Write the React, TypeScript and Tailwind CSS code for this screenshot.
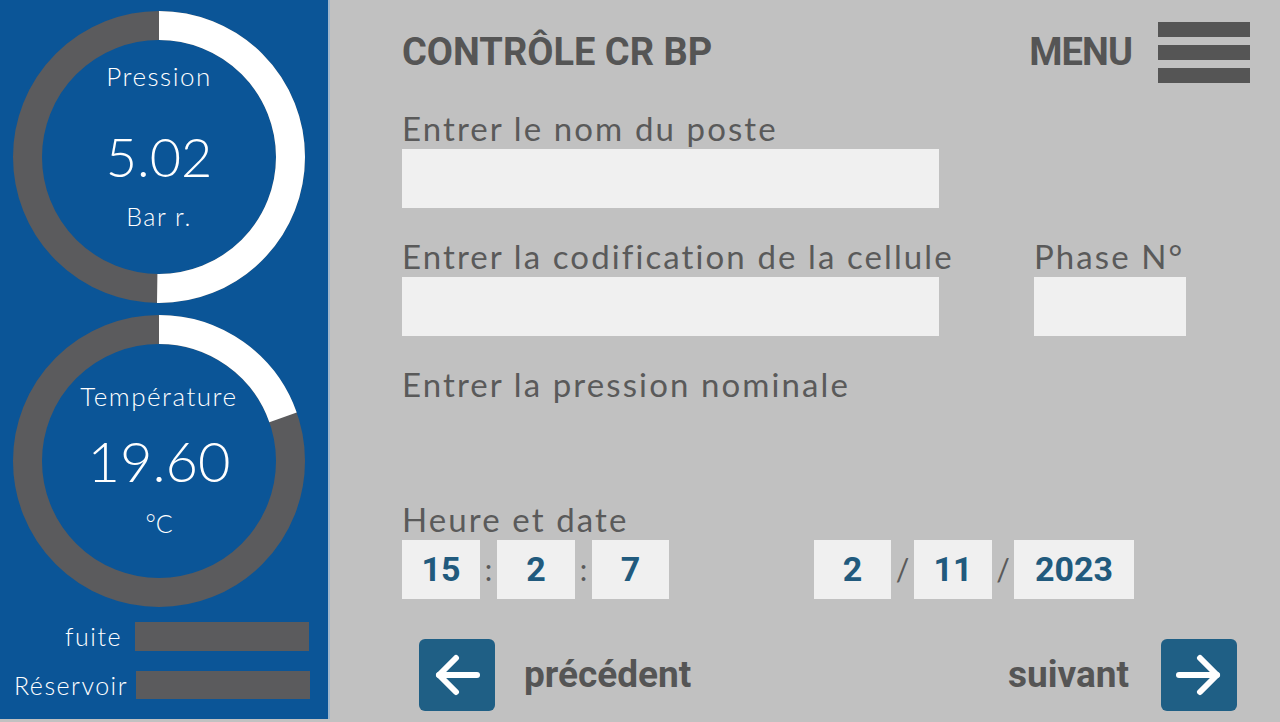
import React from 'react';

const BODY = "font-['Lato','Open_Sans',sans-serif]";
const HEAD = "font-['Roboto','Lato',sans-serif]";

interface GaugeProps {
  label: string;
  value: string;
  unit: string;
  fraction: number;
  valueClass: string;
  labelClass: string;
  unitClass: string;
}

const Gauge: React.FC<GaugeProps> = ({ label, value, unit, fraction, valueClass, labelClass, unitClass }) => {
  const r = 131.5;
  const c = 2 * Math.PI * r;
  return (
    <div className="relative w-[292px] h-[292px]">
      <svg width="292" height="292" viewBox="0 0 292 292">
        <circle cx="146" cy="146" r={r} fill="none" stroke="#5b5b5d" strokeWidth="29" />
        <circle
          cx="146"
          cy="146"
          r={r}
          fill="none"
          stroke="#ffffff"
          strokeWidth="29"
          strokeDasharray={`${c * fraction} ${c}`}
          transform="rotate(-90 146 146)"
        />
      </svg>
      <div className={`absolute inset-0 flex flex-col items-center text-white ${BODY}`}>
        <span className={labelClass}>{label}</span>
        <span className={valueClass}>{value}</span>
        <span className={unitClass}>{unit}</span>
      </div>
    </div>
  );
};

const Label = ({ children, className = '' }: { children: React.ReactNode; className?: string }) => (
  <p className={`text-[33px] leading-[36px] tracking-[2.1px] whitespace-nowrap ${className}`}>{children}</p>
);

const Field = ({ className }: { className: string }) => (
  <div className={`h-[59px] bg-[#f0f0f0] ${className}`}></div>
);

const Box = ({ v, w }: { v: string; w: string }) => (
  <div className={`h-[59px] ${w} bg-[#f0f0f0] flex items-center justify-center text-[34px] font-bold text-[#215a7d] ${HEAD}`}>
    {v}
  </div>
);

const Sep = ({ ch, w }: { ch: string; w: string }) => (
  <div className={`${w} text-center text-[30px] text-[#5a5a5a] ${BODY}`}>{ch}</div>
);

const ArrowBtn = ({ dir }: { dir: 'left' | 'right' }) => (
  <div className="w-[76px] h-[72px] rounded-[6px] bg-[#1f5f85] flex items-center justify-center">
    <svg width="48" height="42" viewBox="0 0 48 42" fill="none" stroke="#fff" strokeWidth="6" strokeLinecap="round" strokeLinejoin="round">
      {dir === 'right' ? (
        <>
          <path d="M4 21h38" />
          <path d="M25 4l17 17-17 17" />
        </>
      ) : (
        <>
          <path d="M44 21H6" />
          <path d="M23 4L6 21l17 17" />
        </>
      )}
    </svg>
  </div>
);

export default function App() {
  return (
    <div className="w-[1280px] h-[722px] flex bg-[#c1c1c1] overflow-hidden">
      {/* left status panel */}
      <aside className="w-[330px] h-[719px] bg-[#0b5597] border-r-2 border-[#9fb6cc] flex flex-col pl-[13px] pt-[11px]">
        <Gauge
          label="Pression"
          value="5.02"
          unit="Bar r."
          fraction={5.02 / 10}
          labelClass="mt-[50px] text-[26px] leading-[30px] tracking-[1.5px] font-light"
          valueClass="mt-[36px] text-[54px] leading-[60px] font-light"
          unitClass="mt-[14px] text-[25px] leading-[30px] tracking-[1.5px] font-light"
        />
        <div className="mt-[12px]">
          <Gauge
            label="Température"
            value="19.60"
            unit="°C"
            fraction={19.6 / 100}
            labelClass="mt-[66px] text-[26px] leading-[30px] tracking-[1.5px] font-light"
            valueClass="mt-[18px] text-[56px] leading-[64px] font-light"
            unitClass="mt-[15px] text-[25px] leading-[30px] font-light"
          />
        </div>
        <div className={`mt-[15px] h-[29px] flex items-center justify-end gap-[13px] pr-[19px] text-white text-[25px] leading-[29px] tracking-[1.5px] font-light ${BODY}`}>
          <span>fuite</span>
          <div className="w-[174px] h-[29px] bg-[#5b5b5d]"></div>
        </div>
        <div className={`mt-[20px] h-[28px] flex items-center justify-end gap-[8px] pr-[18px] text-white text-[25px] leading-[28px] tracking-[1.5px] font-light ${BODY}`}>
          <span>Réservoir</span>
          <div className="w-[174px] h-[28px] bg-[#5b5b5d]"></div>
        </div>
      </aside>

      {/* form */}
      <main className={`flex-1 flex flex-col pl-[72px] pr-[30px] text-[#5a5a5a] ${BODY}`}>
        <div className="mt-[22px] h-[60px] flex items-center justify-between">
          <h1 className={`text-[38px] font-bold text-[#555] ${HEAD}`}>CONTRÔLE CR BP</h1>
          <div className="flex items-center gap-[26px]">
            <span className={`text-[38px] font-bold tracking-tight text-[#555] ${HEAD}`}>MENU</span>
            <div className="flex flex-col gap-[8px]">
              <div className="w-[92px] h-[15px] bg-[#555]"></div>
              <div className="w-[92px] h-[15px] bg-[#555]"></div>
              <div className="w-[92px] h-[15px] bg-[#555]"></div>
            </div>
          </div>
        </div>

        <Label className="mt-[28px]">Entrer le nom du poste</Label>
        <Field className="mt-[3px] w-[537px]" />

        <div className="mt-[30px] flex gap-[95px]">
          <div className="w-[537px] flex flex-col">
            <Label>Entrer la codification de la cellule</Label>
            <Field className="mt-[3px] w-[537px]" />
          </div>
          <div className="w-[152px] flex flex-col">
            <Label>Phase N°</Label>
            <Field className="mt-[3px] w-[152px]" />
          </div>
        </div>

        <Label className="mt-[30px]">Entrer la pression nominale</Label>

        <Label className="mt-[99px]">Heure et date</Label>
        <div className="mt-[3px] flex items-center">
          <Box v="15" w="w-[78px]" />
          <Sep ch=":" w="w-[17px]" />
          <Box v="2" w="w-[78px]" />
          <Sep ch=":" w="w-[17px]" />
          <Box v="7" w="w-[77px]" />
          <div className="w-[145px]"></div>
          <Box v="2" w="w-[77px]" />
          <Sep ch="/" w="w-[23px]" />
          <Box v="11" w="w-[78px]" />
          <Sep ch="/" w="w-[22px]" />
          <Box v="2023" w="w-[120px]" />
        </div>

        <div className="mt-[40px] flex items-center justify-between pl-[17px] pr-[13px]">
          <div className="flex items-center gap-[29px]">
            <ArrowBtn dir="left" />
            <span className={`text-[37px] font-bold text-[#555] ${HEAD}`}>précédent</span>
          </div>
          <div className="flex items-center gap-[32px]">
            <span className={`text-[37px] font-bold text-[#555] ${HEAD}`}>suivant</span>
            <ArrowBtn dir="right" />
          </div>
        </div>
      </main>
    </div>
  );
}
